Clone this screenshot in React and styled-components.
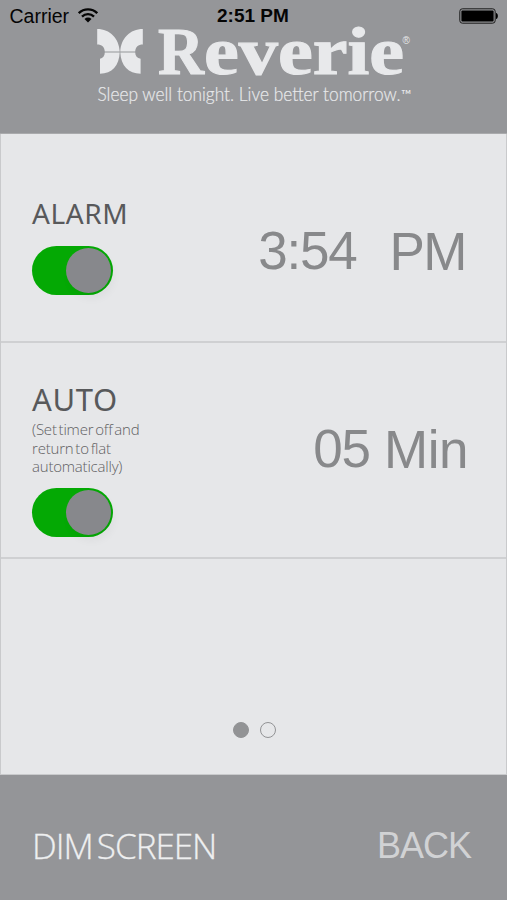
import React, { useState } from "react";
import styled, { createGlobalStyle } from "styled-components";

const GlobalStyle = createGlobalStyle`
  * { box-sizing: border-box; }
  body { margin: 0; background: #e6e7e9; }
`;

const Screen = styled.div`
  width: 507px;
  height: 900px;
  display: flex;
  flex-direction: column;
  background: #e6e7e9;
  font-family: "Liberation Sans", Arial, sans-serif;
  overflow: hidden;
`;

const Header = styled.header`
  height: 134px;
  background: #959699;
  border-bottom: 1px solid #a9aaac;
`;

const StatusBar = styled.div`
  height: 28px;
  padding: 5px 8px 0 9px;
  display: grid;
  grid-template-columns: 208px auto 1fr;
  color: #050505;
  font-size: 19.5px;
  line-height: 22px;
`;

const Carrier = styled.div`
  display: flex;
  align-items: flex-start;
  gap: 9px;
  padding-left: 0.5px;
  svg { margin-top: 3px; }
`;

const Clock = styled.div`
  font-weight: 700;
  font-size: 19px;
`;

const Battery = styled.div`
  display: flex;
  justify-content: flex-end;
  svg { margin-top: 3px; }
`;

const Brand = styled.svg`
  display: block;
  overflow: visible;
  margin-left: 90px;
  fill: #e8e9eb;
`;

const Main = styled.main`
  height: 641px;
  display: flex;
  flex-direction: column;
  border: solid #c9cacc;
  border-width: 0 1px 1px;
`;

const Panel = styled.section`
  height: ${(p) => p.$height}px;
  padding: ${(p) => p.$top}px 38px 0 31px;
  display: flex;
  justify-content: space-between;
  border-bottom: 2px solid #cfd0d2;
`;

const Setting = styled.div`
  display: flex;
  flex-direction: column;
  align-items: flex-start;
`;

const Label = styled.h2`
  margin: 0;
  height: 36px;
  font: 400 ${(p) => p.$size}px/36px "Noto Sans", sans-serif;
  letter-spacing: ${(p) => p.$spacing}px;
  color: #58595b;
  white-space: nowrap;
`;

const Note = styled.p`
  margin: 3px 0 0;
  height: 56px;
  font: 300 15px/18.5px "Open Sans", sans-serif;
  letter-spacing: -0.2px;
  word-spacing: -1.8px;
  color: #5f6062;
  white-space: pre;
`;

const Toggle = styled.button`
  width: 81px;
  height: 49px;
  margin-top: ${(p) => p.$gap}px;
  padding: 2px;
  display: flex;
  justify-content: ${(p) => (p.$on ? "flex-end" : "flex-start")};
  border: 0;
  border-radius: 25px;
  background: ${(p) => (p.$on ? "#04a904" : "#c5c6c8")};
`;

const Knob = styled.span`
  width: 45px;
  height: 45px;
  border-radius: 50%;
  background: #87888c;
  box-shadow: 3px 6px 8px rgba(0, 0, 0, 0.04);
`;

const Value = styled.div`
  display: flex;
  gap: ${(p) => p.$gap}px;
  margin: ${(p) => p.$top}px ${(p) => p.$right}px 0 0;
  font-size: 53px;
  line-height: 60px;
  color: #88898b;
`;

const Word = styled.span`
  padding-top: ${(p) => p.$drop || 0}px;
  letter-spacing: ${(p) => p.$spacing || 0}px;
  white-space: nowrap;
`;

const Pager = styled.nav`
  margin-top: 163px;
  padding-left: 2px;
  display: flex;
  justify-content: center;
  gap: 11px;
`;

const Dot = styled.span`
  width: 16px;
  height: 16px;
  border-radius: 50%;
  border: 1px solid #929395;
  background: ${(p) => (p.$active ? "#929395" : "transparent")};
`;

const Footer = styled.footer`
  height: 125px;
  padding: 46px 36px 0 32px;
  display: flex;
  justify-content: space-between;
  background: #949598;
`;

const FooterButton = styled.button`
  height: 50px;
  padding: 0;
  border: 0;
  background: none;
  white-space: nowrap;
`;

const DimButton = styled(FooterButton)`
  font: 300 35px/48px "Open Sans", sans-serif;
  letter-spacing: -1px;
  word-spacing: -4px;
  color: #eeeff0;
  -webkit-text-stroke: 0.3px #eeeff0;
`;

const BackButton = styled(FooterButton)`
  font: 400 36px/50px "Liberation Sans", sans-serif;
  letter-spacing: -1px;
  color: #d1d2d4;
`;

const WifiIcon = () => (
  <svg width="20" height="15" viewBox="0 0 20 15" fill="none" stroke="#050505" strokeWidth="2.3">
    <path d="M0.8 5.2 A13 13 0 0 1 19.2 5.2" />
    <path d="M4 8.6 A8.5 8.5 0 0 1 16 8.6" />
    <path d="M10 14.5 L6.5 11 A5 5 0 0 1 13.5 11 Z" fill="#050505" stroke="none" />
  </svg>
);

const BatteryIcon = () => (
  <svg width="40" height="16" viewBox="0 0 40 16">
    <rect x="0.8" y="0.8" width="35.4" height="14.4" rx="2.6" fill="none" stroke="#1b1b1b" strokeWidth="1" />
    <rect x="2.4" y="2.4" width="32.2" height="11.2" rx="1" fill="#000" />
    <path d="M37 5 C39.5 5.4 39.5 10.6 37 11 Z" fill="#000" />
  </svg>
);

const Logo = () => (
  <Brand width="330" height="90" viewBox="90 28 330 90">
    <path d="M97.2 29 C110 29 119.2 38.5 119.7 51.6 H104.8 C104.5 46.8 101.8 44.4 97.2 44.4 Z" />
    <path d="M142.8 29 C130 29 120.8 38.5 120.3 51.6 H135.2 C135.5 46.8 138.2 44.4 142.8 44.4 Z" />
    <path d="M104.8 52.6 H119.7 C119.2 65.5 112 73.8 100 73.8 V58.8 C102.8 58.2 104.8 56 104.8 52.6 Z" />
    <path d="M135.2 52.6 H120.3 C120.8 65.5 128.5 73.8 140.6 73.8 V58.8 C137.2 58.2 135.2 56 135.2 52.6 Z" />
    <text x="158" y="74" fontFamily="Liberation Serif, serif" fontWeight="700" fontSize="67"
      stroke="#e8e9eb" strokeWidth="1.1">
      <tspan textLength="46" lengthAdjust="spacingAndGlyphs">R</tspan><tspan textLength="200" lengthAdjust="spacingAndGlyphs">everie</tspan>
    </text>
    <text x="402.5" y="44" fontFamily="Liberation Sans, sans-serif" fontSize="10">®</text>
    <text x="97.5" y="101" fontFamily="Lato, sans-serif" fontWeight="300" fontSize="18.8"
      stroke="#e8e9eb" strokeWidth="0.2"
      textLength="303" lengthAdjust="spacingAndGlyphs">Sleep well tonight. Live better tomorrow.</text>
    <text x="401" y="100" fontFamily="Lato, sans-serif" fontSize="14" textLength="10" lengthAdjust="spacingAndGlyphs">™</text>
  </Brand>
);

function Switch({ gap, label }) {
  const [on, setOn] = useState(true);
  return (
    <Toggle $on={on} $gap={gap} role="switch" aria-checked={on} aria-label={label} onClick={() => setOn(!on)}>
      <Knob />
    </Toggle>
  );
}

export default function App() {
  return (
    <Screen>
      <GlobalStyle />
      <Header>
        <StatusBar>
          <Carrier>Carrier<WifiIcon /></Carrier>
          <Clock>2:51 PM</Clock>
          <Battery><BatteryIcon /></Battery>
        </StatusBar>
        <Logo />
      </Header>
      <Main>
        <Panel $height={209} $top={61}>
          <Setting>
            <Label $size={28} $spacing={0.6}>ALARM</Label>
            <Switch gap={15} label="Alarm" />
          </Setting>
          <Value $gap={33} $top={26} $right={2}>
            <Word $spacing={-1.2}>3:54</Word>
            <Word $drop={1} $spacing={-1.5}>PM</Word>
          </Value>
        </Panel>
        <Panel $height={216} $top={38}>
          <Setting>
            <Label $size={31} $spacing={0.6}>AUTO</Label>
            <Note>{"(Set timer off and\nreturn to flat\nautomatically)"}</Note>
            <Switch gap={12} label="Auto" />
          </Setting>
          <Value $gap={14} $top={38} $right={0}>
            <Word $spacing={-1}>05</Word>
            <Word $drop={1} $spacing={-0.5}>Min</Word>
          </Value>
        </Panel>
        <Pager>
          <Dot $active />
          <Dot />
        </Pager>
      </Main>
      <Footer>
        <DimButton>DIM SCREEN</DimButton>
        <BackButton>BACK</BackButton>
      </Footer>
    </Screen>
  );
}
